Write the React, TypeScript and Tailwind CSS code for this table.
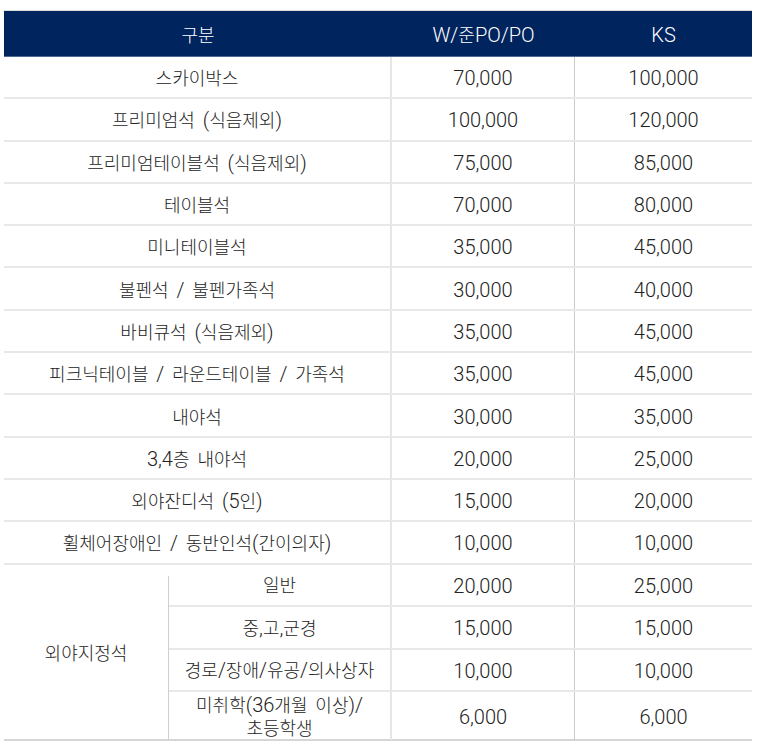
const rows = [
  { name: "스카이박스", po: "70,000", ks: "100,000" },
  { name: "프리미엄석 (식음제외)", po: "100,000", ks: "120,000" },
  { name: "프리미엄테이블석 (식음제외)", po: "75,000", ks: "85,000" },
  { name: "테이블석", po: "70,000", ks: "80,000" },
  { name: "미니테이블석", po: "35,000", ks: "45,000" },
  { name: "불펜석 / 불펜가족석", po: "30,000", ks: "40,000" },
  { name: "바비큐석 (식음제외)", po: "35,000", ks: "45,000" },
  { name: "피크닉테이블 / 라운드테이블 / 가족석", po: "35,000", ks: "45,000" },
  { name: "내야석", po: "30,000", ks: "35,000" },
  { name: "3,4층 내야석", po: "20,000", ks: "25,000" },
  { name: "외야잔디석 (5인)", po: "15,000", ks: "20,000" },
  { name: "휠체어장애인 / 동반인석(간이의자)", po: "10,000", ks: "10,000" },
];

const subRows = [
  { name: ["일반"], po: "20,000", ks: "25,000", h: "h-[42px]" },
  { name: ["중,고,군경"], po: "15,000", ks: "15,000", h: "h-[43px]" },
  { name: ["경로/장애/유공/의사상자"], po: "10,000", ks: "10,000", h: "h-[42px]" },
  { name: ["미취학(36개월 이상)/", "초등학생"], po: "6,000", ks: "6,000", h: "h-[47px]" },
];

// Hangul runs are set a little smaller than the latin/digits, like the source font
function Ko({ s }: { s: string }) {
  return (
    <span className="whitespace-pre [word-spacing:3px]">
      {s.split(/([가-힣]+)/).map((part, i) =>
        /[가-힣]/.test(part) ? (
          <span key={i} className="text-[18px]">
            {part}
          </span>
        ) : (
          part
        )
      )}
    </span>
  );
}

export default function App() {
  return (
    <div className="min-h-[744px] bg-white pl-[4px] pr-[5px] pt-[10px] font-['Roboto','Noto_Sans_CJK_KR',sans-serif] text-[20px] font-light text-[#222]">
      {/* Header */}
      <div className="grid h-[47px] grid-cols-[388px_183px_1fr] border-t border-b border-t-[#dcdcdc] border-b-[#4d6a96] bg-[#00245e] text-white">
        <div className="flex items-center justify-center pt-[2px]">
          <Ko s="구분" />
        </div>
        <div className="flex items-center justify-center pt-[2px]">
          <Ko s="W/준PO/PO" />
        </div>
        <div className="flex items-center justify-center pt-[2px]">KS</div>
      </div>

      {rows.map((r) => (
        <div
          key={r.name}
          className="grid h-[42.3px] grid-cols-[388px_183px_1fr] border-b-2 border-[#e8e8e8]"
        >
          <div className="flex items-center justify-center border-r-2 border-[#e6e6e6] pt-[2px]">
            <Ko s={r.name} />
          </div>
          <div className="flex items-center justify-center border-r border-[#cbcbcb] pt-[2px]">
            {r.po}
          </div>
          <div className="flex items-center justify-center pt-[2px]">{r.ks}</div>
        </div>
      ))}

      {/* Grouped rows */}
      <div className="flex border-b-2 border-[#d6d6d6]">
        <div className="flex w-[165px] shrink-0 flex-col">
          <div className="h-[11px] shrink-0" />
          <div className="flex flex-1 items-center justify-center border-r border-[#cfcfcf] pb-[9px]">
            <Ko s="외야지정석" />
          </div>
        </div>
        <div className="flex-1">
          {subRows.map((r, i) => (
            <div
              key={r.po + i}
              className={`grid ${r.h} grid-cols-[223px_183px_1fr] ${
                i < subRows.length - 1 ? "border-b-2 border-[#e8e8e8]" : ""
              }`}
            >
              <div className="flex flex-col items-center justify-center border-r-2 border-[#e6e6e6] pt-[2px] leading-[23px]">
                {r.name.map((n) => (
                  <div key={n}>
                    <Ko s={n} />
                  </div>
                ))}
              </div>
              <div className="flex items-center justify-center border-r border-[#cbcbcb] pt-[2px]">
                {r.po}
              </div>
              <div className="flex items-center justify-center pt-[2px]">{r.ks}</div>
            </div>
          ))}
        </div>
      </div>
    </div>
  );
}
